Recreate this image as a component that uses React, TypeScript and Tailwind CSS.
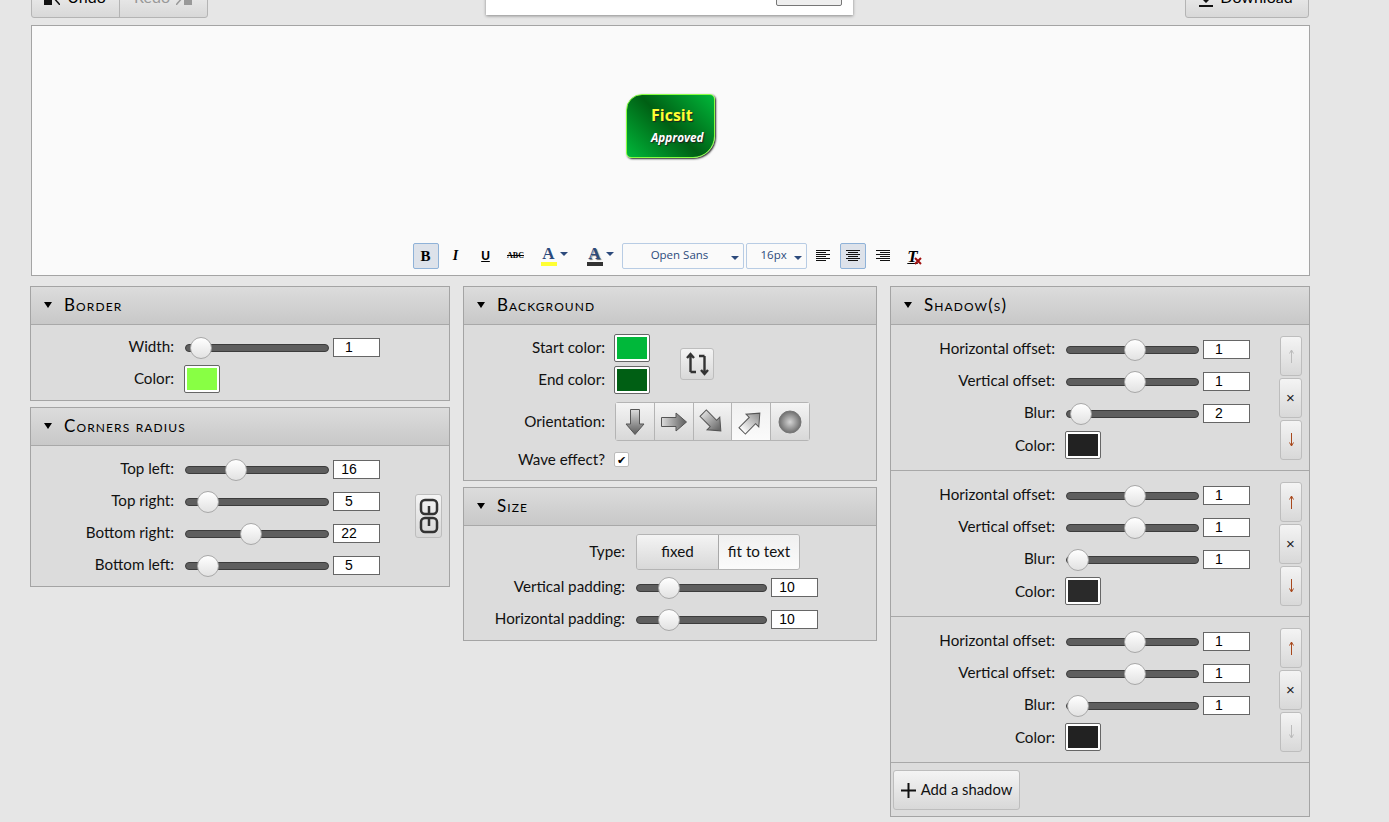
import type { ReactNode } from 'react'

const btnGradient = 'bg-gradient-to-b from-[#f4f4f4] to-[#d8d8d8]'

const Slider = ({ width, knob }: { width: number; knob: number }) => (
  <div className="relative mt-[2px] h-[8px] shrink-0 rounded-full border border-[#3c3c3c] bg-[#5e5e5e]" style={{ width }}>
    <div
      className="absolute top-[-8px] h-[22px] w-[22px] -translate-x-1/2 rounded-full border border-[#a8a8a8] bg-gradient-to-b from-[#ffffff] to-[#e2e2e2]"
      style={{ left: knob }}
    />
  </div>
)

const SliderRow = ({
  label,
  labelWidth,
  trackWidth,
  knob,
  value
}: {
  label: string
  labelWidth: number
  trackWidth: number
  knob: number
  value: number
}) => (
  <div className="flex h-[32px] items-center">
    <span className="shrink-0 pb-[2px] text-right" style={{ width: labelWidth }}>
      {label}
    </span>
    <div className="ml-[11px] flex items-center">
      <Slider width={trackWidth} knob={knob} />
      <input
        readOnly
        value={value}
        className="ml-[4px] h-[19px] w-[47px] border border-[#666] bg-white pr-[15px] text-center font-['Liberation_Sans',sans-serif] text-[14px] text-black outline-none"
      />
    </div>
  </div>
)

const Swatch = ({ color }: { color: string }) => (
  <div className="h-[28px] w-[36px] shrink-0 rounded-[2px] border border-[#666] bg-white p-[2px]">
    <div className="h-full w-full" style={{ backgroundColor: color }} />
  </div>
)

const SwatchRow = ({
  label,
  labelWidth,
  color,
  gap = 10,
  labelClass = 'pb-[2px]'
}: {
  label: string
  labelWidth: number
  color: string
  gap?: number
  labelClass?: string
}) => (
  <div className="flex h-[32px] items-center">
    <span className={`shrink-0 text-right ${labelClass}`} style={{ width: labelWidth }}>
      {label}
    </span>
    <div style={{ marginLeft: gap }}>
      <Swatch color={color} />
    </div>
  </div>
)

const Panel = ({ title, children }: { title: string; children: ReactNode }) => (
  <section className="border border-[#a4a4a4] bg-[#dcdcdc]">
    <header className="flex h-[38px] items-center border-b border-[#a8a8a8] bg-gradient-to-b from-[#dcdcdc] to-[#c8c8c8] pb-[2px] pl-[13px]">
      <span className="h-0 w-0 border-x-[4px] border-t-[6px] border-x-transparent border-t-black" />
      <h2 className="ml-[12px] text-[17px] tracking-[1.1px] text-black [font-variant:small-caps]">{title}</h2>
    </header>
    {children}
  </section>
)

const ArrowIcon = ({ rotate, light }: { rotate: number; light?: boolean }) => {
  const id = light ? 'arrow-fill-light' : 'arrow-fill'
  return (
    <svg width="28" height="28" viewBox="0 0 28 28">
      <defs>
        <linearGradient id={id} x1="0" y1="0" x2="0" y2="1">
          <stop offset="0" stopColor={light ? '#ffffff' : '#dcdcdc'} />
          <stop offset="1" stopColor={light ? '#8c8c8c' : '#5c5c5c'} />
        </linearGradient>
      </defs>
      <path
        d="M9.500 1.500h9V16h4.500L14 26.500 5 16h4.500z"
        fill={`url(#${id})`}
        stroke="#555"
        strokeWidth="1"
        transform={`rotate(${rotate} 14 14)`}
      />
    </svg>
  )
}

const OrientationBar = () => {
  const items = [0, -90, -45, -135, -1]
  return (
    <div className="flex h-[39px] w-[195px] rounded-[3px] border border-[#b4b4b4]">
      {items.map((rotate, i) => (
        <div
          key={rotate}
          className={`flex h-full flex-1 items-center justify-center border-r border-[#b4b4b4] last:border-r-0 ${
            i === 3 ? 'bg-gradient-to-b from-[#f0f0f0] to-[#fbfbfb]' : btnGradient
          }`}
        >
          {rotate === -1 ? (
            <svg width="24" height="24" viewBox="0 0 24 24">
              <defs>
                <radialGradient id="ball-fill">
                  <stop offset="0" stopColor="#d4d4d4" />
                  <stop offset="1" stopColor="#6e6e6e" />
                </radialGradient>
              </defs>
              <circle cx="12" cy="12" r="11" fill="url(#ball-fill)" stroke="#777" />
            </svg>
          ) : (
            <ArrowIcon rotate={rotate} light={i === 3} />
          )}
        </div>
      ))}
    </div>
  )
}

const SideArrow = ({ dir, tone }: { dir: 'up' | 'down'; tone: string }) => (
  <svg width="9" height="14" viewBox="0 0 9 14" className={dir === 'down' ? 'rotate-180' : ''}>
    <path d="M4.500 1v13M2.500 4.500l2-3.500 2 3.500" fill="none" stroke={tone} strokeWidth="1" />
  </svg>
)

const SideButton = ({ children, wide }: { children: ReactNode; wide?: boolean }) => (
  <div
    className={`flex h-[40px] items-center justify-center rounded-[3px] border border-[#bdbdbd] font-['Liberation_Sans',sans-serif] text-[15px] text-[#222] ${btnGradient} ${
      wide ? 'ml-[-1px] w-[23px]' : 'w-[22px]'
    }`}
  >
    {children}
  </div>
)

const ShadowSection = ({
  blurKnob,
  blur,
  color,
  up,
  down
}: {
  blurKnob: number
  blur: number
  color: string
  up: string
  down: string
}) => (
  <div className="flex items-start border-b border-[#a8a8a8] pb-[9px] pt-[8px]">
    <div>
      <SliderRow label="Horizontal offset:" labelWidth={164} trackWidth={133} knob={68} value={1} />
      <SliderRow label="Vertical offset:" labelWidth={164} trackWidth={133} knob={68} value={1} />
      <SliderRow label="Blur:" labelWidth={164} trackWidth={133} knob={blurKnob} value={blur} />
      <SwatchRow label="Color:" labelWidth={164} color={color} labelClass="" />
    </div>
    <div className="ml-[30px] mt-[3px] flex flex-col gap-[2px]">
      <SideButton>
        <SideArrow dir="up" tone={up} />
      </SideButton>
      <SideButton wide>×</SideButton>
      <SideButton>
        <SideArrow dir="down" tone={down} />
      </SideButton>
    </div>
  </div>
)

const ToolButton = ({ active, children }: { active?: boolean; children: ReactNode }) => (
  <div
    className={`flex h-[26px] w-[26px] items-center justify-center rounded-[2px] border ${
      active ? 'border-[#8fb2d8] bg-[#dde2ea]' : 'border-transparent'
    }`}
  >
    {children}
  </div>
)

const AlignIcon = ({ kind }: { kind: 'left' | 'center' | 'right' }) => {
  const rows = [14, 10, 14, 10, 14, 10]
  return (
    <svg width="14" height="12" viewBox="0 0 14 12">
      {rows.map((w, i) => {
        const x = kind === 'left' ? 0 : kind === 'center' ? (14 - w) / 2 : 14 - w
        return <rect key={i} x={x} y={i * 2} width={w} height="1" fill="#111" />
      })}
    </svg>
  )
}

const Caret = () => <span className="block h-0 w-0 border-x-[4px] border-t-[4px] border-x-transparent border-t-[#2c4a7c]" />

const ColorTool = ({ bar, shadow }: { bar: string; shadow?: boolean }) => (
  <div className="flex h-[26px] w-[40px] items-center pl-[7px]">
    <div className="flex flex-col items-center">
      <span
        className={`font-['Liberation_Serif',serif] text-[17px] font-bold leading-[14px] text-[#2c4a7c] ${
          shadow ? '[text-shadow:1px_1px_1px_#666]' : ''
        }`}
      >
        A
      </span>
      <span className="mt-[1px] h-[4px] w-[16px]" style={{ backgroundColor: bar }} />
    </div>
    <span className="ml-[3px] mt-[-4px]">
      <Caret />
    </span>
  </div>
)

const Select = ({ label, className }: { label: string; className: string }) => (
  <div className={`relative flex h-[26px] items-center rounded-[2px] border border-[#b8cce4] pb-[2px] text-[11.500px] text-[#2c4a7c] ${className}`}>
    <span className="font-['Open_Sans',sans-serif]">{label}</span>
    <span className="absolute right-[4px] top-[12px]">
      <Caret />
    </span>
  </div>
)

const Toolbar = () => (
  <div className="ml-[-3px] mt-[85px] flex items-center text-black">
    <ToolButton active>
      <span className="font-['Liberation_Serif',serif] text-[15px] font-bold leading-none">B</span>
    </ToolButton>
    <div className="ml-[4px]">
      <ToolButton>
        <span className="font-['Liberation_Serif',serif] text-[14px] font-bold italic leading-none">I</span>
      </ToolButton>
    </div>
    <div className="ml-[4px]">
      <ToolButton>
        <span className="font-['Liberation_Sans',sans-serif] text-[12px] font-bold leading-none underline">U</span>
      </ToolButton>
    </div>
    <div className="ml-[4px]">
      <ToolButton>
        <span className="font-['Liberation_Serif',serif] text-[8px] font-bold leading-none line-through">ABC</span>
      </ToolButton>
    </div>
    <div className="ml-[5px]">
      <ColorTool bar="#ffff33" />
    </div>
    <div className="ml-[6px]">
      <ColorTool bar="#333333" shadow />
    </div>
    <Select label="Open Sans" className="ml-[2px] w-[122px] justify-center pr-[6px]" />
    <Select label="16px" className="ml-[2px] w-[61px] pl-[14px]" />
    <div className="ml-[3px]">
      <ToolButton>
        <AlignIcon kind="left" />
      </ToolButton>
    </div>
    <div className="ml-[4px]">
      <ToolButton active>
        <AlignIcon kind="center" />
      </ToolButton>
    </div>
    <div className="ml-[4px]">
      <ToolButton>
        <AlignIcon kind="right" />
      </ToolButton>
    </div>
    <div className="ml-[4px]">
      <ToolButton>
        <span className="relative font-['Liberation_Serif',serif] text-[17px] font-bold italic leading-none underline">
          T
          <svg width="8" height="8" viewBox="0 0 8 8" className="absolute left-[7px] top-[9px]">
            <path d="M1 1l6 6M7 1L1 7" stroke="#a01010" strokeWidth="2" />
          </svg>
        </span>
      </ToolButton>
    </div>
  </div>
)

const TopBar = () => (
  <div className="relative ml-[1px] mt-[-19px] flex h-[37px] items-start justify-between text-[16px]">
    <div className={`flex h-[37px] overflow-hidden rounded-[3px] border border-[#b4b4b4] ${btnGradient}`}>
      <div className="flex w-[88px] items-center justify-center gap-[7px] border-r border-[#b4b4b4] pb-[5px] pr-[2px] text-black">
        <svg width="17" height="16" viewBox="0 0 17 16">
          <path d="M1 0h8v16H1z" fill="#111" />
          <path d="M10 8l7 8" stroke="#111" strokeWidth="1.500" fill="none" />
        </svg>
        <span>Undo</span>
      </div>
      <div className="flex w-[87px] items-center justify-center gap-[6px] pb-[5px] text-[#999]">
        <span>Redo</span>
        <svg width="17" height="16" viewBox="0 0 17 16">
          <path d="M8 0h8v16H8z" fill="#999" />
          <path d="M7 8l-7 8" stroke="#999" strokeWidth="1.500" fill="none" />
        </svg>
      </div>
    </div>
    <div className="absolute left-[455px] top-[-10px] flex h-[44px] w-[367px] items-end justify-end bg-white pb-[9px] pr-[11px] shadow-[0_1px_3px_rgba(0,0,0,0.4)]">
      <div className="h-[26px] w-[66px] rounded-[2px] border border-[#777] bg-[#efefef]" />
    </div>
    <div className={`mr-[1px] flex h-[37px] w-[124px] items-center justify-center gap-[7px] rounded-[3px] border border-[#b4b4b4] pb-[5px] pr-[2px] text-black ${btnGradient}`}>
      <svg width="14" height="14" viewBox="0 0 14 14" className="mt-[6px]">
        <path d="M5 0h4v5h3L7 10 2 5h3zM0 12h14v2H0z" fill="#111" />
      </svg>
      <span>Download</span>
    </div>
  </div>
)

const Badge = () => (
  <div className="flex h-[64px] w-[89px] flex-col justify-center rounded-tl-[16px] rounded-tr-[5px] rounded-br-[22px] rounded-bl-[5px] border border-[#88ff44] bg-[linear-gradient(45deg,#00b83a,#005f14_50%,#00b83a)] pl-[24px] font-['Open_Sans',sans-serif] shadow-[1px_1px_2px_#222]">
    <span className="text-[16px] font-bold leading-[22px] text-[#ffff33] [text-shadow:1px_1px_1px_#222]">Ficsit</span>
    <span className="text-[11.700px] font-bold italic leading-[22px] text-white [text-shadow:1px_1px_1px_#222]">Approved</span>
  </div>
)

const LinkIcon = () => (
  <svg width="20" height="38" viewBox="0 0 20 38" fill="none" stroke="#333" strokeWidth="2.500">
    <rect x="2" y="3" width="16" height="14" rx="4" />
    <rect x="2" y="21" width="16" height="14" rx="4" />
    <path d="M10 17V9M10 21v8" />
  </svg>
)

const SwapIcon = () => (
  <svg width="24" height="24" viewBox="0 0 24 24" fill="none" stroke="#333" strokeWidth="2.400">
    <path d="M5.500 20V2M2 6l3.500-4L9 6M5.500 20H11" />
    <path d="M19.500 4v18M16 18l3.500 4 3.500-4M19.500 4H14" />
  </svg>
)

export default function App() {
  return (
    <div className="h-[822px] w-[1389px] overflow-hidden bg-[#e6e6e6] pl-[30px] font-['Lato',sans-serif] text-[15.200px] text-[#111]">
      <div className="w-[1280px]">
        <TopBar />
        <div className="ml-[1px] mt-[7px] flex h-[251px] flex-col items-center border border-[#a4a4a4] bg-[#fafafa] pt-[68px]">
          <Badge />
          <Toolbar />
        </div>

        <div className="mt-[10px] flex items-start gap-[13px]">
          <div className="flex w-[420px] flex-col gap-[6px]">
            <Panel title="Border">
              <div className="pb-[5px] pt-[6px]">
                <SliderRow label="Width:" labelWidth={143} trackWidth={144} knob={15} value={1} />
                <SwatchRow label="Color:" labelWidth={143} color="#88ff44" />
              </div>
            </Panel>
            <Panel title="Corners radius">
              <div className="flex items-center pb-[5px] pt-[7px]">
                <div>
                  <SliderRow label="Top left:" labelWidth={143} trackWidth={144} knob={50} value={16} />
                  <SliderRow label="Top right:" labelWidth={143} trackWidth={144} knob={22} value={5} />
                  <SliderRow label="Bottom right:" labelWidth={143} trackWidth={144} knob={65} value={22} />
                  <SliderRow label="Bottom left:" labelWidth={143} trackWidth={144} knob={22} value={5} />
                </div>
                <div className={`ml-[35px] mt-[-2px] flex h-[44px] w-[27px] items-center justify-center rounded-[3px] border border-[#bdbdbd] ${btnGradient}`}>
                  <LinkIcon />
                </div>
              </div>
            </Panel>
          </div>

          <div className="w-[414px]">
            <Panel title="Background">
              <div className="pb-[5px] pt-[7px]">
                <div className="flex items-center">
                  <div>
                    <SwatchRow label="Start color:" labelWidth={141} color="#00b83a" gap={9} />
                    <SwatchRow label="End color:" labelWidth={141} color="#005f14" gap={9} />
                  </div>
                  <div className={`ml-[30px] flex h-[32px] w-[34px] items-center justify-center rounded-[3px] border border-[#bdbdbd] ${btnGradient}`}>
                    <SwapIcon />
                  </div>
                </div>
                <div className="mt-[6px] flex items-center">
                  <span className="w-[141px] text-right">Orientation:</span>
                  <div className="ml-[10px]">
                    <OrientationBar />
                  </div>
                </div>
                <div className="mt-[2px] flex h-[32px] items-center">
                  <span className="w-[141px] text-right">Wave effect?</span>
                  <div className="ml-[9px] flex h-[15px] w-[15px] items-center justify-center rounded-[2px] border border-[#bbb] bg-white text-[11px] leading-none text-black">
                    ✔
                  </div>
                </div>
              </div>
            </Panel>
            <div className="mt-[6px]">
              <Panel title="Size">
                <div className="pb-[5px] pt-[8px]">
                  <div className="mb-[1px] flex items-center">
                    <span className="w-[161px] pb-[2px] text-right">Type:</span>
                    <div className="ml-[11px] flex h-[36px] w-[164px] overflow-hidden rounded-[3px] border border-[#b4b4b4]">
                      <div className={`flex w-[82px] items-center justify-center border-r border-[#a8a8a8] pb-[2px] ${btnGradient}`}>fixed</div>
                      <div className="flex flex-1 items-center justify-center bg-gradient-to-b from-[#f0f0f0] to-[#fbfbfb] pb-[2px]">fit to text</div>
                    </div>
                  </div>
                  <SliderRow label="Vertical padding:" labelWidth={161} trackWidth={131} knob={32} value={10} />
                  <SliderRow label="Horizontal padding:" labelWidth={161} trackWidth={131} knob={32} value={10} />
                </div>
              </Panel>
            </div>
          </div>

          <div className="w-[420px]">
            <Panel title="Shadow(s)">
              <ShadowSection blurKnob={14} blur={2} color="#222222" up="#bbbbbb" down="#a8481c" />
              <ShadowSection blurKnob={11} blur={1} color="#2a2a2a" up="#a8481c" down="#a8481c" />
              <ShadowSection blurKnob={11} blur={1} color="#222222" up="#a8481c" down="#bbbbbb" />
              <div className="px-[2px] pb-[6px] pt-[7px]">
                <div className={`flex h-[40px] w-[127px] items-center justify-center gap-[5px] rounded-[3px] border border-[#bdbdbd] pb-[2px] text-[14.800px] ${btnGradient}`}>
                  <svg width="15" height="15" viewBox="0 0 15 15" className="mt-[2px]">
                    <path d="M6.500 0h2v6.500H15v2H8.500V15h-2V8.500H0v-2h6.500z" fill="#111" />
                  </svg>
                  <span>Add a shadow</span>
                </div>
              </div>
            </Panel>
          </div>
        </div>
      </div>
    </div>
  )
}
